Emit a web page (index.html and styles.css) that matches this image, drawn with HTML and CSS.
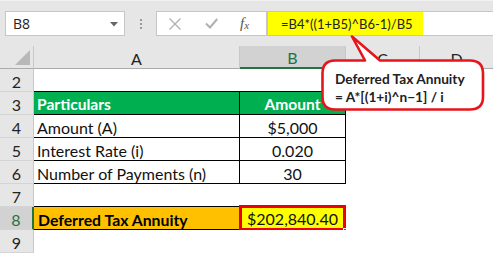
FILE: index.html
```html
<!DOCTYPE html>
<html>
<head>
<meta charset="utf-8">
<link rel="stylesheet" href="styles.css">
</head>
<body>
<div class="app">
  <div class="toolbar">
    <div class="namebox">
      <span class="nb-text">B8</span>
      <svg class="nb-arrow" width="8" height="5" viewBox="0 0 8 5"><path d="M0 0H8L4 4.5Z" fill="#666"/></svg>
    </div>
    <div class="dots"><i></i><i></i><i></i></div>
    <div class="fxbtns">
      <svg class="ic ic-x" width="12" height="12" viewBox="0 0 12 12"><path d="M0.5 0.5L11.5 11.5M11.5 0.5L0.5 11.5" stroke="#b0b0b0" stroke-width="1.3" fill="none"/></svg>
      <svg class="ic ic-ok" width="13" height="11" viewBox="0 0 13 11"><path d="M1 5.5L5 9.5L12.2 1" stroke="#b0b0b0" stroke-width="2" fill="none"/></svg>
      <span class="fx">f<sub>x</sub></span>
    </div>
    <div class="formula"><div class="formula-hl">=B4*((1+B5)^B6-1)/B5</div></div>
  </div>
  <div class="sheet">
    <div class="corner"><svg width="15" height="15" viewBox="0 0 15 15"><path d="M15 0V15H0Z" fill="#b8b8b8"/></svg></div>
    <div class="ch">A</div>
    <div class="ch ch-sel">B</div>
    <div class="ch">C</div>
    <div class="ch ch-last">D</div>

    <div class="rh">2</div>
    <div class="c tb-b"></div>
    <div class="c tb-b"></div>
    <div class="c"></div>
    <div class="c"></div>

    <div class="rh">3</div>
    <div class="c t t-head">Particulars</div>
    <div class="c t t-head t-num">Amount</div>
    <div class="c"></div>
    <div class="c"></div>

    <div class="rh">4</div>
    <div class="c t">Amount (A)</div>
    <div class="c t t-num">$5,000</div>
    <div class="c"></div>
    <div class="c"></div>

    <div class="rh">5</div>
    <div class="c t">Interest Rate (i)</div>
    <div class="c t t-num">0.020</div>
    <div class="c"></div>
    <div class="c"></div>

    <div class="rh">6</div>
    <div class="c t">Number of Payments (n)</div>
    <div class="c t t-num">30</div>
    <div class="c"></div>
    <div class="c"></div>

    <div class="rh">7</div>
    <div class="c tb-b"></div>
    <div class="c"></div>
    <div class="c"></div>
    <div class="c"></div>

    <div class="rh rh-sel">8</div>
    <div class="c res-label">Deferred Tax Annuity</div>
    <div class="c res-val">$202,840.40<span class="handle"></span></div>
    <div class="c"></div>
    <div class="c"></div>

    <div class="rh">9</div>
    <div class="c"></div>
    <div class="c"></div>
    <div class="c"></div>
    <div class="c"></div>
  </div>

  <div class="callout">
    <svg class="callout-shape" width="170" height="80" viewBox="0 0 170 80">
      <path d="M14 25.5 H44 L31 1.5 L59 25.5 H149 Q162 25.5 162 38.5 V62 Q162 74.5 149 74.5 H14 Q1.5 74.5 1.5 62 V38.5 Q1.5 25.5 14 25.5 Z" fill="#fff" stroke="#e8141b" stroke-width="2.6" stroke-linejoin="round"/>
    </svg>
    <div class="callout-text">
      <div>Deferred Tax Annuity</div>
      <div>= A*[(1+i)^n&minus;1] / i</div>
    </div>
  </div>
</div>
</body>
</html>
```
FILE: styles.css
```css
* { box-sizing: border-box; }
html, body { margin: 0; padding: 0; background: #fff; }
body { font-family: Lato, "Liberation Sans", sans-serif; }
.app { position: relative; width: 493px; height: 255px; overflow: hidden; }

.toolbar {
  height: 46px;
  background: #e6e6e6;
  border-top: 1px solid #f2f2f2;
  display: flex;
  align-items: center;
  padding-left: 5px;
}
.namebox {
  width: 120px;
  height: 25px;
  background: #fff;
  border: 1px solid #c6c6c6;
  display: flex;
  align-items: center;
  justify-content: space-between;
  padding: 0 6px 0 7px;
}
.nb-text { font-family: "Open Sans", sans-serif; font-size: 14px; color: #222; }
.nb-arrow { margin-top: 1px; }
.dots {
  width: 31px;
  display: flex;
  flex-direction: column;
  align-items: center;
  gap: 2px;
}
.dots i { display: block; width: 2px; height: 2px; background: #9a9a9a; }
.fxbtns {
  width: 111px;
  height: 25px;
  background: #fff;
  border: 1px solid #c6c6c6;
  display: flex;
  align-items: center;
  padding-left: 12px;
}
.ic-x { margin-right: 24px; }
.ic-ok { margin-right: 22px; }
.fx {
  font-family: "Liberation Serif", serif;
  font-style: italic;
  font-size: 15px;
  color: #555;
}
.fx sub { font-size: 11px; vertical-align: -1px; }
.formula {
  flex: 1;
  height: 25px;
  background: #fff;
  border: 1px solid #c6c6c6;
  border-right: none;
  display: flex;
}
.formula-hl {
  width: 155px;
  background: #ffff00;
  font-size: 13px;
  color: #222;
  padding-left: 13px;
  line-height: 24px;
  white-space: nowrap;
}

.sheet {
  display: grid;
  grid-template-columns: 34px 206px 106px 74px 1fr;
  grid-template-rows: 23px;
  grid-auto-rows: 23px;
}
.corner {
  background: #e6e6e6;
  border-right: 1px solid #c8c8c8;
  border-bottom: 1px solid #ababab;
  display: flex;
  align-items: flex-end;
  justify-content: flex-end;
  padding: 0 3px 3px 0;
}
.ch {
  background: #e6e6e6;
  border-right: 1px solid #c8c8c8;
  border-bottom: 1px solid #ababab;
  font-size: 16px;
  color: #222;
  display: flex;
  align-items: center;
  justify-content: center;
  padding-top: 2px;
}
.ch-sel { background: #d2d2d2; color: #217346; border-bottom: 2px solid #217346; }
.ch-last { border-right: none; }
.rh {
  background: #e6e6e6;
  border-right: 1px solid #c8c8c8;
  border-bottom: 1px solid #d4d4d4;
  font-size: 16px;
  color: #222;
  display: flex;
  align-items: center;
  justify-content: center;
  padding-top: 2px;
}
.rh-sel { background: #d2d2d2; color: #217346; border-right: 2px solid #217346; }
.c { background: #fff; position: relative; }
.tb-b { border-bottom: 1px solid #000; }
.t {
  border-right: 1px solid #000;
  border-bottom: 1px solid #000;
  font-size: 16px;
  color: #111;
  padding: 2px 0 0 3px;
  display: flex;
  align-items: center;
  white-space: nowrap;
}
.t-num { justify-content: center; padding-left: 0; }
.t-head { background: #00b050; color: #fff; font-weight: bold; font-size: 15.6px; }
.res-label {
  background: #ffc000;
  border-bottom: 1px solid #000;
  font-size: 15.8px;
  font-weight: bold;
  color: #000;
  padding: 2px 0 0 4px;
  display: flex;
  align-items: center;
}
.res-val {
  background: #ffff00;
  border: 3px solid #ee0000;
  margin: -2px 0 -1px -1px;
  font-size: 16px;
  color: #111;
  display: flex;
  align-items: center;
  justify-content: center;
  padding-top: 1px;
}
.handle {
  position: absolute;
  right: -5px;
  bottom: -5px;
  width: 5px;
  height: 5px;
  background: #217346;
  border: 1px solid #fff;
}

.callout {
  position: absolute;
  left: 321px;
  top: 35px;
  width: 170px;
  height: 80px;
}
.callout-shape { position: absolute; left: 0; top: 0; }
.callout-text {
  position: relative;
  padding: 35px 0 0 14px;
  font-size: 13.7px;
  font-weight: bold;
  color: #222;
  line-height: 18px;
  white-space: nowrap;
}
```
